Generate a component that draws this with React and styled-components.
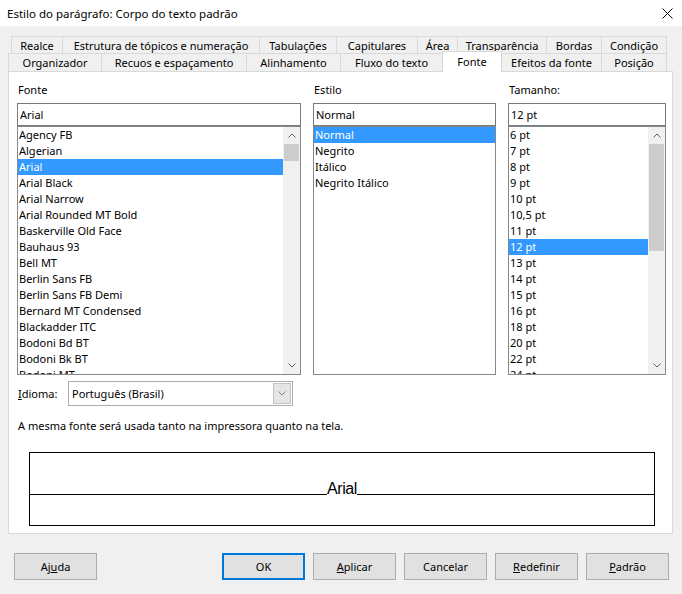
import styled, { createGlobalStyle, css } from 'styled-components'

const uiFont = `"Noto Sans", "Open Sans", sans-serif`

const GlobalStyle = createGlobalStyle`
  html, body {
    margin: 0;
    padding: 0;
    background: #f0f0f0;
  }
  * {
    box-sizing: border-box;
  }
`

const Window = styled.div`
  width: 682px;
  height: 594px;
  display: flex;
  flex-direction: column;
  background: #f0f0f0;
  font-family: ${uiFont};
  font-size: 11px;
  color: #000;
  overflow: hidden;
`
const TitleBar = styled.div`
  height: 26px;
  flex: none;
  display: flex;
  align-items: center;
  justify-content: space-between;
  padding: 0 9px 0 7px;
  background: #fff;
  font-size: 11.5px;
`
const Content = styled.div`
  display: flex;
  flex-direction: column;
  padding: 10px 9px 0 8px;
`
const TabRow = styled.div`
  display: flex;
  height: ${(p) => p.$height}px;
  margin-left: ${(p) => p.$indent || 0}px;
`
const Tab = styled.div`
  width: ${(p) => p.$width}px;
  height: 100%;
  display: flex;
  align-items: center;
  justify-content: center;
  white-space: nowrap;
  background: #f0f0f0;
  border-top: 1px solid #d9d9d9;
  border-right: 1px solid #d9d9d9;
  &:first-child {
    border-left: 1px solid #d9d9d9;
  }
  ${(p) =>
    p.$active &&
    css`
      position: relative;
      z-index: 1;
      background: #fff;
      height: calc(100% + 3px);
      margin-top: -2px;
      padding-bottom: 2px;
      border-left: 1px solid #d9d9d9;
      margin-left: -1px;
      width: ${p.$width + 1}px;
    `}
`
const Panel = styled.div`
  background: #fff;
  border: 1px solid #d9d9d9;
  padding: 10px 6px 7px 8px;
`
const FieldGrid = styled.div`
  display: grid;
  grid-template-columns: 284px 183px 158px;
  column-gap: 12px;
`
const Field = styled.div`
  display: flex;
  flex-direction: column;
`
const FieldLabel = styled.div`
  line-height: 16px;
  margin: 0 0 5px 1px;
`
const TextBox = styled.div`
  height: 23px;
  border: 1px solid #7a7a7a;
  padding: 0 2px;
  display: flex;
  align-items: center;
  background: #fff;
`
const ListBox = styled.div`
  height: 249px;
  border: 1px solid #828790;
  display: flex;
  background: #fff;
`
const ListItems = styled.div`
  flex: 1;
  overflow: hidden;
`
const ListItem = styled.div`
  height: 16px;
  line-height: 16px;
  padding-left: 1px;
  white-space: nowrap;
  background: ${(p) => (p.$selected ? '#3399ff' : 'transparent')};
  color: ${(p) => (p.$selected ? '#fff' : '#000')};
`
const ScrollBar = styled.div`
  width: 17px;
  flex: none;
  display: flex;
  flex-direction: column;
  background: #f0f0f0;
`
const ScrollArrow = styled.div`
  height: 17px;
  flex: none;
  display: flex;
  align-items: center;
  justify-content: center;
`
const ScrollTrack = styled.div`
  flex: 1;
  display: flex;
  flex-direction: column;
`
const ScrollThumb = styled.div`
  height: ${(p) => p.$size}px;
  margin: 0 1px;
  background: #cdcdcd;
`
const LanguageRow = styled.div`
  display: flex;
  align-items: center;
  margin-top: 6px;
`
const LanguageLabel = styled.div`
  width: 51px;
  padding-left: 1px;
`
const Select = styled.div`
  width: 225px;
  height: 25px;
  border: 1px solid #adadad;
  background: #fff;
  display: flex;
  align-items: stretch;
`
const SelectValue = styled.div`
  flex: 1;
  display: flex;
  align-items: center;
  padding-left: 3px;
`
const SelectButton = styled.div`
  width: 18px;
  margin: 1px;
  background: #e5e5e5;
  border: 1px solid #c4c4c4;
  display: flex;
  align-items: center;
  justify-content: center;
`
const Note = styled.div`
  margin-top: 12px;
  line-height: 16px;
  padding-left: 1px;
`
const PreviewBox = styled.div`
  margin: 18px 11px 0 12px;
  height: 74px;
  border: 1px solid #000;
`
const PreviewRow = styled.div`
  height: 42px;
  display: flex;
  align-items: flex-end;
`
const PreviewRule = styled.div`
  flex: 1;
  border-bottom: 1px solid #000;
`
const PreviewText = styled.span`
  font-family: "Liberation Sans", Arial, sans-serif;
  font-size: 16px;
  line-height: 13px;
  letter-spacing: -0.4px;
`
const ButtonBar = styled.div`
  display: flex;
  gap: 8px;
  padding: 19px 13px 0 14px;
`
const Button = styled.div`
  width: 83px;
  height: 27px;
  display: flex;
  align-items: center;
  justify-content: center;
  background: #e1e1e1;
  border: 1px solid ${(p) => (p.$default ? '#0078d7' : '#adadad')};
  box-shadow: ${(p) => (p.$default ? 'inset 0 0 0 1px #0078d7' : 'none')};
  margin-right: ${(p) => (p.$pushLeft ? 'auto' : '0')};
`

const Chevron = ({ down, color = '#606060' }) => (
  <svg width="8" height="5" viewBox="0 0 8 5">
    <polyline
      points={down ? '0.5,0.5 4,4 7.5,0.5' : '0.5,4.5 4,1 7.5,4.5'}
      fill="none"
      stroke={color}
      strokeWidth="1"
    />
  </svg>
)

const CloseIcon = () => (
  <svg width="11" height="11" viewBox="0 0 11 11">
    <path d="M0.5 0.5 L10.5 10.5 M10.5 0.5 L0.5 10.5" stroke="#000" strokeWidth="1" />
  </svg>
)

const List = ({ items, selected, thumb }) => (
  <ListBox>
    <ListItems>
      {items.map((item) => (
        <ListItem key={item} $selected={item === selected}>
          {item}
        </ListItem>
      ))}
    </ListItems>
    {thumb && (
      <ScrollBar>
        <ScrollArrow>
          <Chevron />
        </ScrollArrow>
        <ScrollTrack>
          <ScrollThumb $size={thumb} />
        </ScrollTrack>
        <ScrollArrow>
          <Chevron down />
        </ScrollArrow>
      </ScrollBar>
    )}
  </ListBox>
)

const tabsTop = [
  ['Realce', 52],
  ['Estrutura de tópicos e numeração', 197],
  ['Tabulações', 77],
  ['Capitulares', 81],
  ['Área', 40],
  ['Transparência', 89],
  ['Bordas', 55],
  ['Condição', 65],
]
const tabsBottom = [
  ['Organizador', 94],
  ['Recuos e espaçamento', 145],
  ['Alinhamento', 94],
  ['Fluxo do texto', 102],
  ['Fonte', 59],
  ['Efeitos da fonte', 100],
  ['Posição', 65],
]

const fonts = [
  'Agency FB',
  'Algerian',
  'Arial',
  'Arial Black',
  'Arial Narrow',
  'Arial Rounded MT Bold',
  'Baskerville Old Face',
  'Bauhaus 93',
  'Bell MT',
  'Berlin Sans FB',
  'Berlin Sans FB Demi',
  'Bernard MT Condensed',
  'Blackadder ITC',
  'Bodoni Bd BT',
  'Bodoni Bk BT',
  'Bodoni MT',
]
const styles = ['Normal', 'Negrito', 'Itálico', 'Negrito Itálico']
const sizes = [
  '6 pt', '7 pt', '8 pt', '9 pt', '10 pt', '10,5 pt', '11 pt', '12 pt',
  '13 pt', '14 pt', '15 pt', '16 pt', '18 pt', '20 pt', '22 pt', '24 pt',
]

const App = () => (
  <>
    <GlobalStyle />
    <Window>
      <TitleBar>
        <span>Estilo do parágrafo: Corpo do texto padrão</span>
        <CloseIcon />
      </TitleBar>

      <Content>
        <TabRow $height={17} $indent={3}>
          {tabsTop.map(([label, width]) => (
            <Tab key={label} $width={width}>
              {label}
            </Tab>
          ))}
        </TabRow>
        <TabRow $height={18}>
          {tabsBottom.map(([label, width]) => (
            <Tab key={label} $width={width} $active={label === 'Fonte'}>
              {label}
            </Tab>
          ))}
        </TabRow>

        <Panel>
          <FieldGrid>
            <Field>
              <FieldLabel>Fonte</FieldLabel>
              <TextBox>Arial</TextBox>
              <List items={fonts} selected="Arial" thumb={17} />
            </Field>
            <Field>
              <FieldLabel>Estilo</FieldLabel>
              <TextBox>Normal</TextBox>
              <List items={styles} selected="Normal" />
            </Field>
            <Field>
              <FieldLabel>Tamanho:</FieldLabel>
              <TextBox>12 pt</TextBox>
              <List items={sizes} selected="12 pt" thumb={107} />
            </Field>
          </FieldGrid>

          <LanguageRow>
            <LanguageLabel>
              <u>I</u>dioma:
            </LanguageLabel>
            <Select>
              <SelectValue>Português (Brasil)</SelectValue>
              <SelectButton>
                <Chevron down color="#808080" />
              </SelectButton>
            </Select>
          </LanguageRow>

          <Note>A mesma fonte será usada tanto na impressora quanto na tela.</Note>

          <PreviewBox>
            <PreviewRow>
              <PreviewRule />
              <PreviewText>Arial</PreviewText>
              <PreviewRule />
            </PreviewRow>
          </PreviewBox>
        </Panel>
      </Content>

      <ButtonBar>
        <Button $pushLeft>
          <span>
            Aj<u>u</u>da
          </span>
        </Button>
        <Button $default>OK</Button>
        <Button>
          <span>
            <u>A</u>plicar
          </span>
        </Button>
        <Button>Cancelar</Button>
        <Button>
          <span>
            <u>R</u>edefinir
          </span>
        </Button>
        <Button>
          <span>
            <u>P</u>adrão
          </span>
        </Button>
      </ButtonBar>
    </Window>
  </>
)

export default App
